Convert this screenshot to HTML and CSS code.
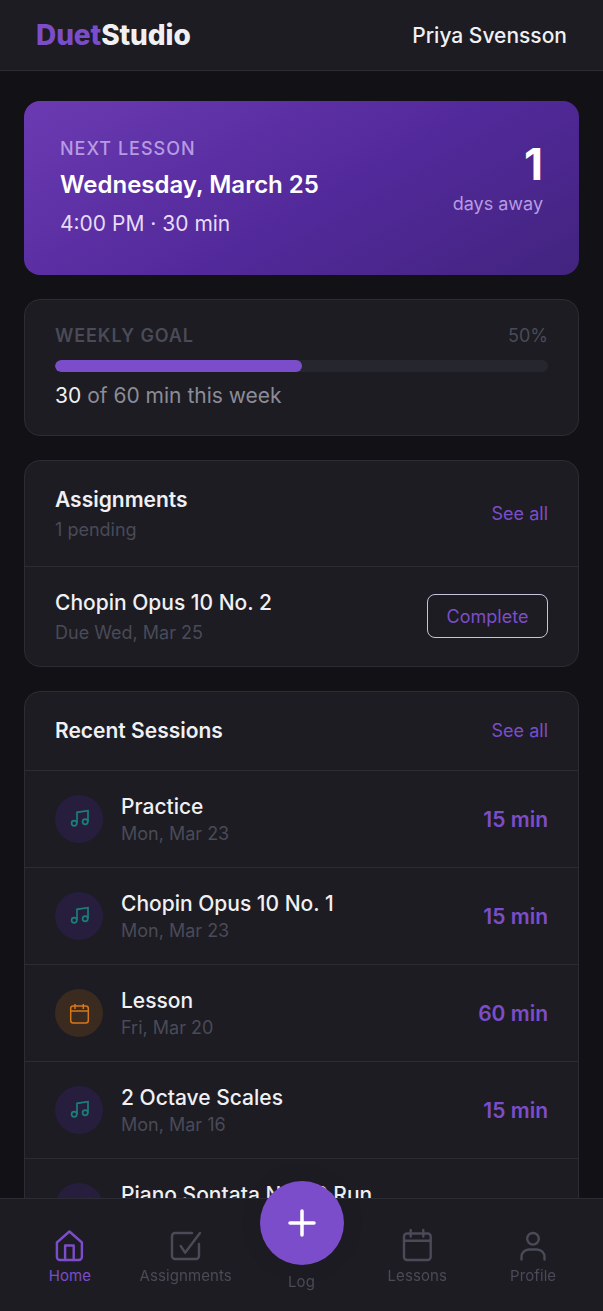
FILE: index.html
```html
<!DOCTYPE html>
<html lang="en">
<head>
<meta charset="utf-8">
<title>DuetStudio</title>
<link rel="stylesheet" href="styles.css">
</head>
<body>
<header class="topbar">
  <div class="logo"><span class="logo-accent">Duet</span>Studio</div>
  <div class="user">Priya Svensson</div>
</header>
<main class="content">
  <section class="hero">
    <div class="hero-main">
      <div class="hero-label">NEXT LESSON</div>
      <div class="hero-date">Wednesday, March 25</div>
      <div class="hero-time">4:00 PM · 30 min</div>
    </div>
    <div class="hero-count">
      <div class="hero-num">1</div>
      <div class="hero-away">days away</div>
    </div>
  </section>
  <section class="card goal">
    <div class="goal-head"><span class="goal-label">WEEKLY GOAL</span><span class="goal-pct">50%</span></div>
    <div class="track"><div class="fill"></div></div>
    <div class="goal-text"><span class="goal-strong">30</span> of 60 min this week</div>
  </section>
  <section class="card">
    <div class="card-head assign-head">
      <div>
        <div class="card-title">Assignments</div>
        <div class="card-sub">1 pending</div>
      </div>
      <a class="see-all">See all</a>
    </div>
    <div class="assign-row">
      <div>
        <div class="row-title">Chopin Opus 10 No. 2</div>
        <div class="row-sub assign-sub">Due Wed, Mar 25</div>
      </div>
      <button class="complete">Complete</button>
    </div>
  </section>
  <section class="card">
    <div class="card-head sessions-head">
      <div class="card-title">Recent Sessions</div>
      <a class="see-all">See all</a>
    </div>
    <div class="session">
      <div class="badge badge-note"><svg class="note" viewBox="0 0 24 24"><path d="M10 16.3V5.3L21 3.7v11"/><circle cx="7.2" cy="16.3" r="2.6"/><circle cx="18.2" cy="14.700" r="2.600"/></svg></div>
      <div class="session-info"><div class="row-title">Practice</div><div class="row-sub">Mon, Mar 23</div></div>
      <div class="mins">15 min</div>
    </div>
    <div class="session">
      <div class="badge badge-note"><svg class="note" viewBox="0 0 24 24"><path d="M10 16.3V5.3L21 3.7v11"/><circle cx="7.2" cy="16.3" r="2.6"/><circle cx="18.2" cy="14.700" r="2.600"/></svg></div>
      <div class="session-info"><div class="row-title">Chopin Opus 10 No. 1</div><div class="row-sub">Mon, Mar 23</div></div>
      <div class="mins">15 min</div>
    </div>
    <div class="session">
      <div class="badge badge-lesson"><svg class="cal-small" viewBox="0 0 24 24"><rect x="3.7" y="5" width="17.6" height="17" rx="2.5"/><path d="M8 3v5M16.3 3v5M3.7 10h17.6"/></svg></div>
      <div class="session-info"><div class="row-title">Lesson</div><div class="row-sub">Fri, Mar 20</div></div>
      <div class="mins">60 min</div>
    </div>
    <div class="session">
      <div class="badge badge-note"><svg class="note" viewBox="0 0 24 24"><path d="M10 16.3V5.3L21 3.7v11"/><circle cx="7.2" cy="16.3" r="2.6"/><circle cx="18.2" cy="14.700" r="2.600"/></svg></div>
      <div class="session-info"><div class="row-title">2 Octave Scales</div><div class="row-sub">Mon, Mar 16</div></div>
      <div class="mins">15 min</div>
    </div>
    <div class="session">
      <div class="badge badge-note"><svg class="note" viewBox="0 0 24 24"><path d="M10 16.3V5.3L21 3.7v11"/><circle cx="7.2" cy="16.3" r="2.6"/><circle cx="18.2" cy="14.700" r="2.600"/></svg></div>
      <div class="session-info"><div class="row-title">Piano Sontata No. 16 Run</div><div class="row-sub">Mon, Mar 16</div></div>
      <div class="mins">15 min</div>
    </div>
  </section>
</main>
<nav class="bottomnav">
  <a class="tab tab-active">
    <svg class="tab-icon" viewBox="0.6 0 32 32"><path d="M16 1.5 3.500 12.500V27a3 3 0 0 0 3 3h19a3 3 0 0 0 3-3V12.500Z"/><path d="M11.700 30V15.500h8.600V30"/></svg>
    <span>Home</span>
  </a>
  <a class="tab">
    <svg class="tab-icon" viewBox="0 0 32 32"><path d="M29 14v12a3 3 0 0 1-3 3H5a3 3 0 0 1-3-3V6a3 3 0 0 1 3-3h17"/><path d="m10.700 16 4.400 6.700L30 3"/></svg>
    <span>Assignments</span>
  </a>
  <a class="tab tab-log">
    <span class="fab"><svg class="fab-icon" viewBox="0 0 28 28"><path d="M14 2v24M2 14h24"/></svg></span>
    <span>Log</span>
  </a>
  <a class="tab">
    <svg class="tab-icon" viewBox="0 0 32 32"><rect x="3" y="3.500" width="26.700" height="26.500" rx="3"/><path d="M9.700 0v6.500M22.300 0v6.500M3 10.700h26.700"/></svg>
    <span>Lessons</span>
  </a>
  <a class="tab">
    <svg class="tab-icon" viewBox="0 0 32 32"><circle cx="16" cy="8.800" r="5.800"/><path d="M4.500 29.500V27a7.500 7.500 0 0 1 7.500-7.500h8a7.500 7.500 0 0 1 7.500 7.500v2.500"/></svg>
    <span>Profile</span>
  </a>
</nav>
</body>
</html>
```
FILE: styles.css
```css
* { box-sizing: border-box; }
html, body { margin: 0; height: 100%; }
body {
  height: 1311px;
  overflow: hidden;
  background: #111116;
  color: #f0f0f4;
  font-family: Inter, "Liberation Sans", sans-serif;
}
.topbar {
  height: 71px;
  padding: 0 36px;
  display: flex;
  align-items: center;
  justify-content: space-between;
  background: #1c1c22;
  border-bottom: 1px solid #2c2c34;
}
.logo { font-size: 28px; font-weight: 800; color: #f0f0f4; letter-spacing: -0.1px; }
.logo-accent { color: #7c4dca; }
.user { font-size: 21px; font-weight: 500; color: #f0f0f4; }
.content {
  padding: 30px 24px 0;
  display: flex;
  flex-direction: column;
  gap: 24px;
}
.hero {
  height: 174px;
  flex: none;
  padding: 36px;
  display: flex;
  justify-content: space-between;
  align-items: flex-start;
  border-radius: 16px;
  background: linear-gradient(150deg, #6b3ab2 0%, #52299a 55%, #42247f 100%);
}
.hero-main { padding-top: 1px; }
.hero-label { font-size: 18px; font-weight: 500; color: #b79be2; letter-spacing: 1px; }
.hero-date { margin-top: 11px; font-size: 24px; font-weight: 600; color: #fff; }
.hero-time { margin-top: 12px; font-size: 21px; color: #e6dcf6; }
.hero-count { text-align: right; }
.hero-num { font-size: 44px; font-weight: 700; color: #fff; }
.hero-away { margin-top: 2px; font-size: 18px; color: #b79be2; }
.card {
  flex: none;
  background: #1c1c22;
  border: 1px solid #2c2c34;
  border-radius: 16px;
}
.goal { height: 137px; padding: 25px 30px 0; }
.goal-head { display: flex; justify-content: space-between; align-items: center; }
.goal-label { font-size: 18px; font-weight: 600; color: #4a4a58; letter-spacing: 0.9px; }
.goal-pct { font-size: 18px; color: #4a4a58; }
.track { margin-top: 14px; height: 12px; border-radius: 6px; background: #26262e; overflow: hidden; }
.fill { width: 50%; height: 100%; border-radius: 6px; background: #7c4dca; }
.goal-text { margin-top: 11px; font-size: 21px; color: #8c8c98; }
.goal-strong { color: #f0f0f4; }
.card-head {
  display: flex;
  justify-content: space-between;
  align-items: center;
  padding: 0 30px;
  border-bottom: 1px solid #2c2c34;
}
.assign-head { height: 106px; }
.sessions-head { height: 79px; padding-bottom: 2px; }
.card-title { font-size: 21px; font-weight: 600; color: #f0f0f4; }
.card-sub { margin-top: 7px; font-size: 18px; color: #4a4a58; }
.see-all { font-size: 18px; color: #7c4dca; }
.assign-row {
  height: 99px;
  padding: 0 30px;
  display: flex;
  justify-content: space-between;
  align-items: center;
}
.row-title { font-size: 21px; font-weight: 500; color: #f0f0f4; }
.row-sub { margin-top: 4px; font-size: 18px; color: #4a4a58; }
.assign-sub { margin-top: 7px; }
.complete {
  width: 121px;
  height: 44px;
  margin-bottom: 2px;
  padding: 2px 0 0;
  background: transparent;
  border: 1px solid #c9c2dc;
  border-radius: 8px;
  font: 400 18px Inter, "Liberation Sans", sans-serif;
  color: #7c4dca;
}
.session {
  height: 97px;
  padding: 0 30px;
  display: flex;
  align-items: center;
  gap: 18px;
  border-bottom: 1px solid #2c2c34;
}
.badge {
  width: 48px;
  height: 48px;
  flex: none;
  border-radius: 50%;
  display: flex;
  align-items: center;
  justify-content: center;
}
.badge-note { background: #271e3e; }
.badge-lesson { background: #3a2a20; }
.note { width: 24px; height: 24px; fill: none; stroke: #1a7f78; stroke-width: 1.7; }
.cal-small { width: 24px; height: 24px; fill: none; stroke: #d5781a; stroke-width: 1.5; }
.session-info { flex: 1; }
.mins { font-size: 21px; font-weight: 600; color: #7c4dca; }
.bottomnav {
  position: fixed;
  left: 0;
  right: 0;
  bottom: 0;
  height: 113px;
  padding: 30px 12px 0;
  display: grid;
  grid-template-columns: repeat(5, 1fr);
  background: #1c1c22;
  border-top: 1px solid #2c2c34;
}
.tab {
  display: flex;
  flex-direction: column;
  align-items: center;
  gap: 4px;
  font-size: 15px;
  letter-spacing: 0.1px;
  color: #4a4a58;
}
.tab-active { color: #7c4dca; }
.tab-log { margin-top: -48px; gap: 7px; }
.tab-icon {
  width: 32px;
  height: 32px;
  margin-top: 1px;
  overflow: visible;
  fill: none;
  stroke: currentColor;
  stroke-width: 2.4;
  stroke-linejoin: round;
  stroke-linecap: round;
}
.fab {
  width: 84px;
  height: 84px;
  margin-left: 1px;
  flex: none;
  border-radius: 50%;
  display: flex;
  align-items: center;
  justify-content: center;
  background: #7c4dca;
  box-shadow: 0 0 24px rgba(0, 0, 0, 0.08);
}
.fab-icon { width: 28px; height: 28px; fill: none; stroke: #fff; stroke-width: 3.5; stroke-linecap: round; }
```
